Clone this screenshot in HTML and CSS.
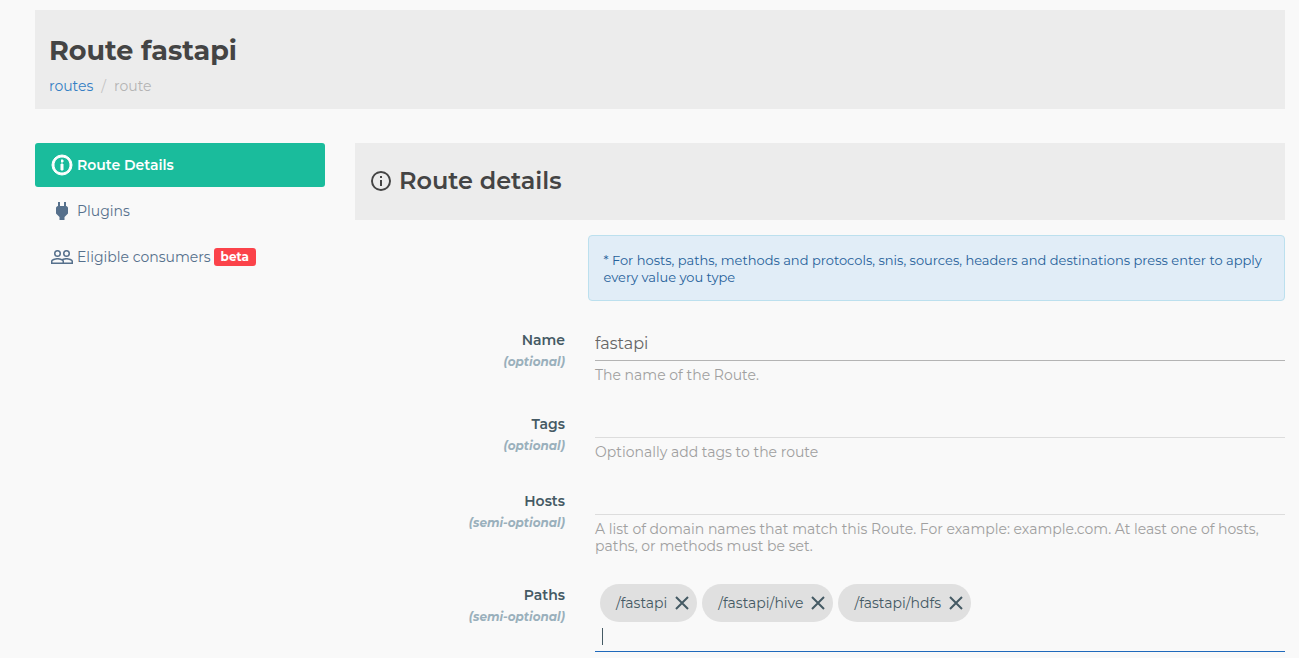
FILE: index.html
```html
<!DOCTYPE html>
<html lang="en">
<head>
<meta charset="utf-8">
<title>Route fastapi</title>
<link rel="stylesheet" href="styles.css">
</head>
<body>
<svg class="sprite" aria-hidden="true">
  <symbol id="i-info" viewBox="0 0 24 24"><path d="M11 9h2V7h-2m1 13c-4.41 0-8-3.59-8-8s3.590-8 8-8 8 3.590 8 8-3.590 8-8 8m0-18A10 10 0 0 0 2 12a10 10 0 0 0 10 10 10 10 0 0 0 10-10A10 10 0 0 0 12 2m-1 15h2v-6h-2v6z"/></symbol>
  <symbol id="i-plug" viewBox="0 0 24 24"><path d="M16 7V3h-2v4h-4V3H8v4C7 7 6 8 6 9v5.500L9.500 18v3h5v-3l3.500-3.500V9c0-1-1-2-2-2z"/></symbol>
  <symbol id="i-people" viewBox="0 0 24 24"><path d="M16.500 13c-1.200 0-3.070.340-4.500 1-1.430-.670-3.300-1-4.500-1C5.330 13 1 14.080 1 16.250V19h22v-2.750c0-2.170-4.330-3.250-6.500-3.250zm-4 4.500h-10v-1.250c0-.540 2.560-1.750 5-1.750s5 1.210 5 1.750v1.250zm9 0H14v-1.250c0-.460-.2-.860-.520-1.220.880-.3 1.960-.530 3.020-.530 2.440 0 5 1.210 5 1.750v1.250zM7.500 12a3.500 3.500 0 1 0 0-7 3.500 3.500 0 0 0 0 7zm0-5.500a2 2 0 1 1 0 4 2 2 0 0 1 0-4zM16.500 12a3.500 3.500 0 1 0 0-7 3.500 3.500 0 0 0 0 7zm0-5.500a2 2 0 1 1 0 4 2 2 0 0 1 0-4z"/></symbol>
  <symbol id="i-close" viewBox="0 0 14 14"><path d="M1 1l12 12M13 1L1 13" fill="none" stroke="currentColor" stroke-width="2"/></symbol>
</svg>
<div class="page">
  <header class="page-header">
    <h1>Route fastapi</h1>
    <nav class="crumbs" aria-label="Breadcrumb">
      <a href="#routes">routes</a><span class="slash">/</span><span>route</span>
    </nav>
  </header>
  <div class="columns">
    <nav class="side" aria-label="Route sections">
      <a class="side-link active" href="#details"><svg class="icon"><use href="#i-info"/></svg>Route Details</a>
      <a class="side-link" href="#plugins"><svg class="icon"><use href="#i-plug"/></svg>Plugins</a>
      <a class="side-link" href="#consumers"><svg class="icon"><use href="#i-people"/></svg>Eligible consumers<span class="badge">beta</span></a>
    </nav>
    <main>
      <div class="section-header">
        <svg class="icon"><use href="#i-info"/></svg>
        <h2>Route details</h2>
      </div>
      <p class="alert">* For hosts, paths, methods and protocols, snis, sources, headers and destinations press enter to apply every value you type</p>
      <form class="form">
        <div class="row">
          <label for="name">Name<em>(optional)</em></label>
          <div class="field">
            <input class="text" id="name" type="text" value="fastapi">
            <p class="hint">The name of the Route.</p>
          </div>
        </div>
        <div class="row">
          <label for="tags">Tags<em>(optional)</em></label>
          <div class="field">
            <input class="text chips-text" id="tags" type="text">
            <p class="hint">Optionally add tags to the route</p>
          </div>
        </div>
        <div class="row">
          <label for="hosts">Hosts<em>(semi-optional)</em></label>
          <div class="field">
            <input class="text chips-text" id="hosts" type="text">
            <p class="hint">A list of domain names that match this Route. For example: example.com. At least one of hosts, paths, or methods must be set.</p>
          </div>
        </div>
        <div class="row">
          <label for="paths">Paths<em>(semi-optional)</em></label>
          <div class="field chips-field">
            <div class="chips">
              <span class="chip">/fastapi<button type="button" aria-label="Remove /fastapi"><svg><use href="#i-close"/></svg></button></span>
              <span class="chip">/fastapi/hive<button type="button" aria-label="Remove /fastapi/hive"><svg><use href="#i-close"/></svg></button></span>
              <span class="chip">/fastapi/hdfs<button type="button" aria-label="Remove /fastapi/hdfs"><svg><use href="#i-close"/></svg></button></span>
            </div>
            <div class="entry"><span class="caret"></span><input id="paths" type="text"></div>
          </div>
        </div>
      </form>
    </main>
  </div>
</div>
</body>
</html>
```
FILE: styles.css
```css
* { box-sizing: border-box; }

body {
  margin: 0;
  background: #f9f9f9;
  color: #455a64;
  font: 14px/22px Montserrat, Inter, sans-serif;
}

h1, h2, p { margin: 0; }
a { text-decoration: none; }
.sprite { display: none; }
.icon { flex: none; fill: currentColor; width: 24px; height: 24px; }

.page { padding: 10px 14px 6px 35px; }

.page-header {
  padding: 25px 14px 12px;
  background: #ececec;
}
.page-header h1 {
  color: #444;
  font-size: 27px;
  line-height: 32px;
  font-weight: 700;
}
.crumbs {
  display: flex;
  gap: 8px;
  margin-top: 8px;
  color: #b4b4b4;
}
.crumbs a { color: #347fc4; }
.crumbs .slash { color: #c4c4c4; }

.columns {
  display: grid;
  grid-template-columns: 290px minmax(0, 1fr);
  gap: 30px;
  margin-top: 34px;
}

.side {
  display: flex;
  flex-direction: column;
  gap: 2px;
}
.side-link {
  display: flex;
  align-items: center;
  gap: 3px;
  height: 44px;
  padding: 0 15px;
  border-radius: 3px;
  color: #56708c;
}
.side-link.active {
  background: #1abc9c;
  color: #fff;
  font-weight: 600;
}
.side-link.active .icon { stroke: currentColor; stroke-width: 1; }
.badge {
  padding: 0 7px;
  border-radius: 3px;
  background: #fb434a;
  color: #fff;
  font-size: 12px;
  line-height: 18px;
  font-weight: 700;
}

.section-header {
  display: flex;
  align-items: center;
  gap: 6px;
  height: 77px;
  padding: 0 14px 2px;
  background: #ececec;
  color: #444;
}
.section-header h2 {
  font-size: 24px;
  line-height: 28px;
  font-weight: 600;
}

.alert {
  width: 75%;
  margin: 15px 0 28px auto;
  padding: 16px 15px 14px;
  border: 1px solid #bce0ee;
  border-radius: 4px;
  background: #e1edf7;
  color: #26619a;
  font-size: 13px;
  line-height: 17px;
}

.form { display: grid; gap: 30px; }
.row {
  display: grid;
  grid-template-columns: 7fr 23fr;
  gap: 30px;
  align-items: start;
}
label {
  text-align: right;
  font-weight: 600;
}
label em {
  display: block;
  color: #9ab0bc;
  font-size: 12px;
  font-weight: 700;
}

input {
  display: block;
  width: 100%;
  padding: 0;
  border: 0;
  outline: 0;
  background: transparent;
  color: #666;
  font: inherit;
}
.text {
  height: 32px;
  padding-bottom: 2px;
  border-bottom: 1px solid #b4b4b4;
  font-size: 16px;
}
.chips-text {
  height: 25px;
  border-bottom-color: #ddd;
}
.hint {
  padding-top: 6px;
  margin-bottom: -1px;
  color: #a0a0a0;
  line-height: 17px;
}

.chips-field { border-bottom: 1px solid #1f69bb; }
.chips {
  display: flex;
  flex-wrap: wrap;
  gap: 5px;
  padding-left: 5px;
}
.chip {
  display: flex;
  align-items: center;
  gap: 7px;
  height: 38px;
  padding: 0 7px 0 16px;
  border-radius: 19px;
  background: #e0e0e0;
}
.chip button {
  display: flex;
  padding: 0;
  border: 0;
  background: none;
  color: #455a64;
}
.chip svg { width: 16px; height: 14px; }
.entry {
  display: flex;
  align-items: center;
  height: 29px;
  padding-left: 7px;
}
.caret {
  flex: none;
  width: 1px;
  height: 17px;
  background: #455a64;
}
```
